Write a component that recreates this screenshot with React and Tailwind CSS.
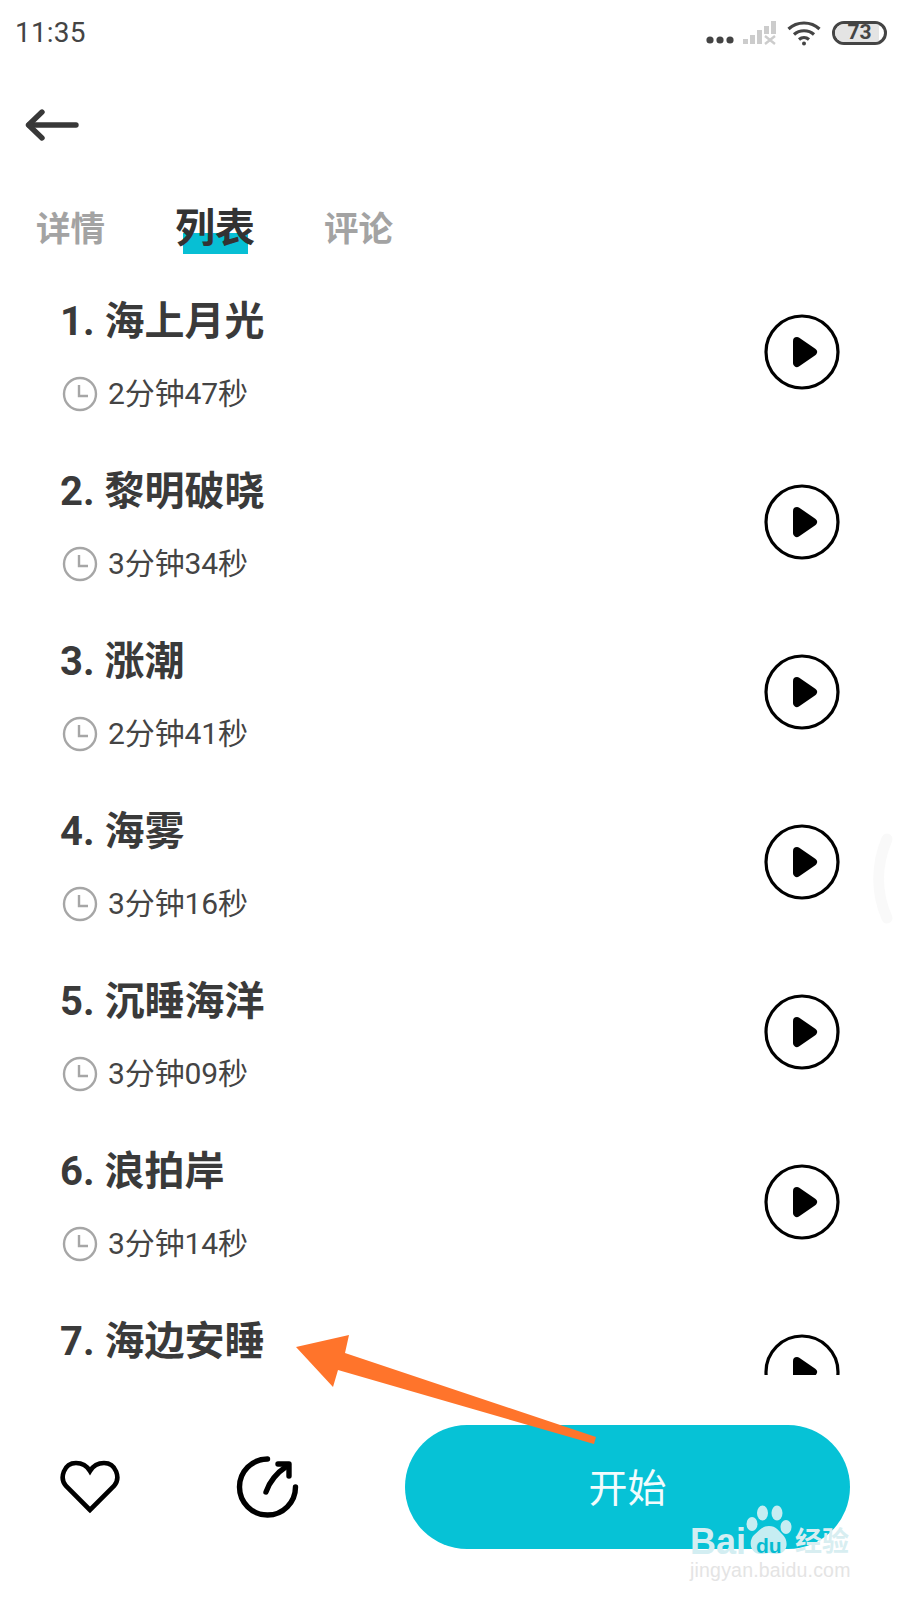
import React from 'react'

const tracks = [
  { title: '1. 海上月光', time: '2分钟47秒' },
  { title: '2. 黎明破晓', time: '3分钟34秒' },
  { title: '3. 涨潮', time: '2分钟41秒' },
  { title: '4. 海雾', time: '3分钟16秒' },
  { title: '5. 沉睡海洋', time: '3分钟09秒' },
  { title: '6. 浪拍岸', time: '3分钟14秒' },
  { title: '7. 海边安睡' },
]

function StatusBar() {
  return (
    <div className="h-[64px] flex items-center justify-between pl-[15px] pr-[13px] pt-[1px] shrink-0">
      <span className="text-[#444] text-[28px] leading-none tracking-[0.2px]">11:35</span>
      <div className="flex items-center">
        <svg width="30" height="10" viewBox="0 0 30 10" className="mt-[14px] mr-[8px]" fill="#444">
          <circle cx="5" cy="5" r="3.6" />
          <circle cx="15" cy="5" r="3.6" />
          <circle cx="25" cy="5" r="3.6" />
        </svg>
        <svg width="34" height="26" viewBox="0 0 34 26" className="mr-[10px]" fill="#ccc">
          <rect x="0" y="19" width="5" height="5" />
          <rect x="7" y="15" width="5" height="9" />
          <rect x="14" y="10" width="5" height="14" />
          <rect x="21" y="6" width="5" height="8" />
          <rect x="28" y="1" width="5" height="13" />
          <path d="M22 16l10 8M32 16l-10 8" stroke="#ccc" strokeWidth="2.4" />
        </svg>
        <svg width="34" height="26" viewBox="0 0 34 26" className="mr-[11px]" fill="none" stroke="#444" strokeWidth="3.2">
          <path d="M1.5 9C10 1 24 1 32.5 9" />
          <path d="M7 14.5C12.5 9.5 21.5 9.5 27 14.5" />
          <path d="M12 19.5C15 17 19 17 22 19.5" />
          <circle cx="17" cy="23.5" r="2" fill="#444" stroke="none" />
        </svg>
        <div className="relative w-[55px] h-[24px] rounded-full border-[3px] border-[#444] overflow-hidden flex items-center justify-center">
          <div className="absolute left-0 top-0 bottom-0 w-[44px] bg-[#e4e4e4]" />
          <span className="relative text-[#444] text-[21px] font-bold leading-none">73</span>
        </div>
      </div>
    </div>
  )
}

function BackArrow() {
  return (
    <svg width="54" height="32" viewBox="0 0 54 32" fill="none" stroke="#383838" strokeWidth="5.4" strokeLinecap="round" strokeLinejoin="round">
      <path d="M51 16H4" />
      <path d="M17 3L3.5 16L17 29" />
    </svg>
  )
}

function ClockIcon() {
  return (
    <svg width="36" height="36" viewBox="0 0 36 36" fill="none" stroke="#a6a6a6" strokeWidth="2.4" className="shrink-0 ml-[2px]">
      <circle cx="18" cy="18" r="16" />
      <path d="M17 9v11h9" />
    </svg>
  )
}

function PlayIcon() {
  return (
    <svg width="76" height="76" viewBox="0 0 76 76" className="shrink-0">
      <circle cx="38" cy="38" r="36" fill="none" stroke="#000" strokeWidth="3.2" />
      <path d="M33 27L49 38L33 49Z" fill="#000" stroke="#000" strokeWidth="8" strokeLinejoin="round" />
    </svg>
  )
}

function TrackRow({ title, time }) {
  return (
    <div className="h-[170px] shrink-0 flex items-center justify-between pl-[60px] pr-[60px]">
      <div className="self-start pt-[27px]">
        <div className="text-[#3a3a3a] text-[40px] leading-[56px] font-bold">{title}</div>
        {time && (
          <div className="flex items-center gap-[10px] mt-[24px]">
            <ClockIcon />
            <span className="text-[#444] text-[30px] leading-[40px] tracking-[-0.1px]">{time}</span>
          </div>
        )}
      </div>
      <PlayIcon />
    </div>
  )
}

function Watermark() {
  return (
    <div className="absolute left-[690px] top-[1503px] w-[165px] h-[78px]">
      <div className="absolute left-0 top-[24px] text-[#d3eef2] text-[36px] leading-[30px] font-bold font-['Liberation_Sans',sans-serif]">Bai</div>
      <svg width="50" height="54" viewBox="0 0 50 54" className="absolute left-[54px] top-0" fill="#c6edf2">
        <ellipse cx="18.5" cy="10" rx="5.5" ry="7.5" />
        <ellipse cx="33" cy="10" rx="5.5" ry="7.5" />
        <ellipse cx="8" cy="21" rx="5.5" ry="7" />
        <ellipse cx="42" cy="24" rx="5.5" ry="7" />
        <path d="M25 23c7 0 10 5 14 9 6 6 5 19-7 19-3 0-5-1-7-1s-5 1-8 1C6 51 4 38 10 32c5-4 8-9 15-9Z" />
      </svg>
      <div className="absolute left-[66px] top-[32px] text-[#05bcd1] text-[21px] leading-none font-bold font-['Liberation_Sans',sans-serif]">du</div>
      <div className="absolute left-[105px] top-[24px] text-[#d8eef1] text-[27px] leading-[30px] font-bold">经验</div>
      <div className="absolute left-0 top-[55px] text-[#e4e4e4] text-[19.5px] leading-[24px] font-['Liberation_Sans',sans-serif] tracking-[0.2px]">jingyan.baidu.com</div>
    </div>
  )
}

export default function App() {
  return (
    <div className="relative w-[900px] h-[1600px] bg-white overflow-hidden flex flex-col font-['Roboto','Noto_Sans_CJK_SC',sans-serif]">
      <StatusBar />

      <div className="h-[90px] shrink-0 pl-[25px] pt-[45px]">
        <BackArrow />
      </div>

      <div className="h-[113px] shrink-0 flex items-start pl-[36px] pt-[51px]">
        <span className="text-[#a3a3a3] text-[34.5px] leading-[48px] font-bold">详情</span>
        <span className="relative ml-[70px] text-[#333] text-[40px] leading-[48px] font-bold">
          <span className="absolute left-[8px] top-[28px] w-[65px] h-[21px] bg-[#07bfd4]" />
          <span className="relative">列表</span>
        </span>
        <span className="ml-[69px] text-[#a3a3a3] text-[34.5px] leading-[48px] font-bold">评论</span>
      </div>

      <div className="flex-1 min-h-0 flex flex-col overflow-hidden">
        <div className="h-[1108px] flex flex-col overflow-hidden">
          {tracks.map((t) => (
            <TrackRow key={t.title} title={t.title} time={t.time} />
          ))}
        </div>

        <div className="flex items-center pl-[60px] pt-[50px]">
          <svg width="60" height="54" viewBox="0 0 60 54" fill="none" stroke="#000" strokeWidth="4.6" strokeLinejoin="miter">
            <path d="M30 50L6 26C-1 18 4 3 16 3c6 0 11 3 14 8 3-5 8-8 14-8 12 0 17 15 10 23Z" />
          </svg>
          <svg width="64" height="64" viewBox="0 0 64 64" fill="none" stroke="#000" strokeWidth="5.4" strokeLinecap="round" strokeLinejoin="round" className="ml-[116px] mt-[2px]">
            <path d="M31.5 3A28 28 0 1 0 59.5 31" />
            <path d="M30 36C33 27 39 18 51 10" />
            <path d="M42 8L53 8L53 20" />
          </svg>
          <button className="ml-[105px] w-[445px] h-[124px] pt-[4px] rounded-full bg-[#06c2d6] text-[#f2fcfd] text-[39px] leading-none">
            开始
          </button>
        </div>
      </div>

      {/* scroll ghost + annotation arrow sit over the page */}
      <svg width="900" height="1600" viewBox="0 0 900 1600" className="absolute left-0 top-0 pointer-events-none">
        <path d="M887 839C876 865 876 893 887 918" fill="none" stroke="#f9f9f9" strokeWidth="11" strokeLinecap="round" />
        <path d="M296 1347L349 1335L345 1353L596 1437L594 1444L338 1370L333 1387Z" fill="#ff742b" />
      </svg>

      <Watermark />
    </div>
  )
}
